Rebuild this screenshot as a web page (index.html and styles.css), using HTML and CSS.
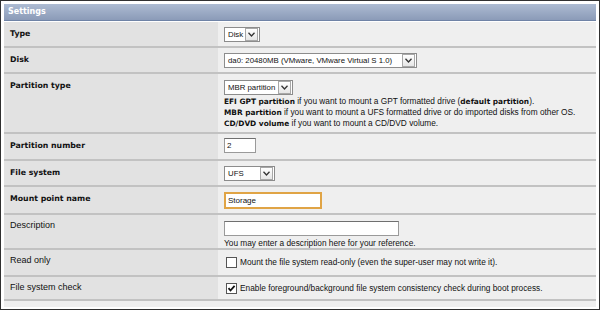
FILE: index.html
```html
<!DOCTYPE html>
<html>
<head>
<meta charset="utf-8">
<link rel="stylesheet" href="styles.css">
</head>
<body>
<div class="frame">
  <div class="panel">
    <div class="head">Settings</div>

    <div class="row r-type">
      <div class="lab b">Type</div>
      <div class="val">
        <span class="sel w-type"><span class="st">Disk</span><span class="arr"><svg width="7" height="5" viewBox="0 0 7 5"><path d="M0.5 0.8 L3.5 4 L6.5 0.8" fill="none" stroke="#333" stroke-width="1.3"/></svg></span></span>
      </div>
    </div>

    <div class="row r-disk">
      <div class="lab b">Disk</div>
      <div class="val">
        <span class="sel w-disk"><span class="st">da0: 20480MB (VMware, VMware Virtual S 1.0)</span><span class="arr"><svg width="7" height="5" viewBox="0 0 7 5"><path d="M0.5 0.8 L3.5 4 L6.5 0.8" fill="none" stroke="#333" stroke-width="1.3"/></svg></span></span>
      </div>
    </div>

    <div class="row r-ptype">
      <div class="lab b">Partition type</div>
      <div class="val">
        <span class="sel w-part"><span class="st">MBR partition</span><span class="arr"><svg width="7" height="5" viewBox="0 0 7 5"><path d="M0.5 0.8 L3.5 4 L6.5 0.8" fill="none" stroke="#333" stroke-width="1.3"/></svg></span></span>
        <div class="help">
          <div><b>EFI GPT partition</b> if you want to mount a GPT formatted drive (<b>default partition</b>).</div>
          <div><b>MBR partition</b> if you want to mount a UFS formatted drive or do imported disks from other OS.</div>
          <div><b>CD/DVD volume</b> if you want to mount a CD/DVD volume.</div>
        </div>
      </div>
    </div>

    <div class="row r-pnum">
      <div class="lab b">Partition number</div>
      <div class="val">
        <span class="inp w-num">2</span>
      </div>
    </div>

    <div class="row r-fs">
      <div class="lab b">File system</div>
      <div class="val">
        <span class="sel w-fs"><span class="st">UFS</span><span class="arr"><svg width="7" height="5" viewBox="0 0 7 5"><path d="M0.5 0.8 L3.5 4 L6.5 0.8" fill="none" stroke="#333" stroke-width="1.3"/></svg></span></span>
      </div>
    </div>

    <div class="row r-mount">
      <div class="lab b">Mount point name</div>
      <div class="val">
        <span class="inp focus w-mount">Storage</span>
      </div>
    </div>

    <div class="row r-desc">
      <div class="lab">Description</div>
      <div class="val">
        <span class="inp w-desc"></span>
        <div class="note">You may enter a description here for your reference.</div>
      </div>
    </div>

    <div class="row r-ro">
      <div class="lab">Read only</div>
      <div class="val chk-line">
        <span class="cb"></span>
        <span class="txt">Mount the file system read-only (even the super-user may not write it).</span>
      </div>
    </div>

    <div class="row r-fsck">
      <div class="lab">File system check</div>
      <div class="val chk-line">
        <span class="cb"><svg width="9" height="9" viewBox="0 0 9 9"><path d="M1.5 4.2 L3.5 6.5 L7.6 1.8" fill="none" stroke="#111" stroke-width="1.8"/></svg></span>
        <span class="txt">Enable foreground/background file system consistency check during boot process.</span>
      </div>
    </div>

    <div class="tail"></div>
  </div>
</div>
</body>
</html>
```

FILE: styles.css
```css
html, body {
  margin: 0;
  padding: 0;
  background: #ffffff;
}

.frame {
  width: 600px;
  height: 310px;
  box-sizing: border-box;
  border: 1px solid #303030;
  padding: 3px 3px 2px 3px;
  background: #ffffff;
  overflow: hidden;
}

.panel {
  display: flex;
  flex-direction: column;
  height: 100%;
}

.head {
  height: 16px;
  line-height: 16px;
  padding-left: 4px;
  background: linear-gradient(#adbbd2, #8b9bb8);
  border-bottom: 1px solid #6f83a6;
  color: #ffffff;
  font-family: "DejaVu Sans", sans-serif;
  font-weight: bold;
  font-size: 8px;
  margin-bottom: 1px;
  flex: none;
}

.row {
  display: grid;
  grid-template-columns: 214px 1fr;
  border-bottom: 2px solid #c2c2c2;
  flex: none;
}

.lab {
  background: #e2e2e2;
  padding: 5px 6px 0 6px;
  font-family: "Liberation Sans", sans-serif;
  font-size: 9px;
  line-height: 11px;
  color: #111;
}

.lab.b {
  font-family: "DejaVu Sans", sans-serif;
  font-weight: bold;
  font-size: 7.8px;
  padding-top: 6px;
}

.val {
  background: #efefef;
  padding: 5px 6px 4px 6px;
  font-family: "Liberation Sans", sans-serif;
  font-size: 8.3px;
  color: #111;
}

.sel {
  display: flex;
  align-items: center;
  height: 15px;
  box-sizing: border-box;
  border: 1px solid #8c8c8c;
  background: #ffffff;
  padding: 0 1px 0 3px;
  font-size: 7.8px;
  line-height: 13px;
}

.sel .st {
  flex: 1;
  white-space: nowrap;
}

.arr {
  width: 11px;
  height: 11px;
  border: 1px solid #a8a8a8;
  background: linear-gradient(#ffffff, #e6e6e6);
  display: flex;
  align-items: center;
  justify-content: center;
  flex: none;
}

.w-type { width: 36px; }
.w-disk { width: 193px; }
.w-part { width: 69px; }
.w-fs { width: 51px; }

.inp {
  display: block;
  height: 15px;
  box-sizing: border-box;
  border: 1px solid #9a9a9a;
  border-top-color: #6f6f6f;
  background: #ffffff;
  padding: 0 2px;
  font-size: 8px;
  line-height: 13px;
}

.inp.focus {
  height: 17px;
  border: 2px solid #e0a445;
  line-height: 13px;
}

.w-num { width: 32px; }
.w-mount { width: 98px; }
.w-desc { width: 175px; }

.help {
  margin-top: 1px;
  line-height: 10px;
}

.help b {
  font-family: "DejaVu Sans", sans-serif;
  font-size: 7.4px;
}

.note {
  margin-top: 2px;
  line-height: 10px;
}

.chk-line {
  display: flex;
  align-items: center;
  gap: 3px;
  padding-left: 8px;
  line-height: 11px;
}

.cb {
  width: 11px;
  height: 11px;
  box-sizing: border-box;
  border: 1px solid #555555;
  background: #ffffff;
  display: flex;
  align-items: center;
  justify-content: center;
  flex: none;
}

.r-type .val, .r-disk .val, .r-fs .val { padding-top: 5px; padding-bottom: 4px; }
.r-ptype .val { padding-top: 6px; padding-bottom: 3px; }
.r-pnum .val { padding-top: 4px; padding-bottom: 6px; }
.r-mount .val { padding-top: 5px; padding-bottom: 4px; }
.r-desc .val { padding-top: 6px; padding-bottom: 0; }
.r-ro .val { padding-top: 7px; padding-bottom: 7px; }
.r-fsck .val { padding-top: 6px; padding-bottom: 5px; }

.tail {
  flex: 1;
  background: #efefef;
}
```
